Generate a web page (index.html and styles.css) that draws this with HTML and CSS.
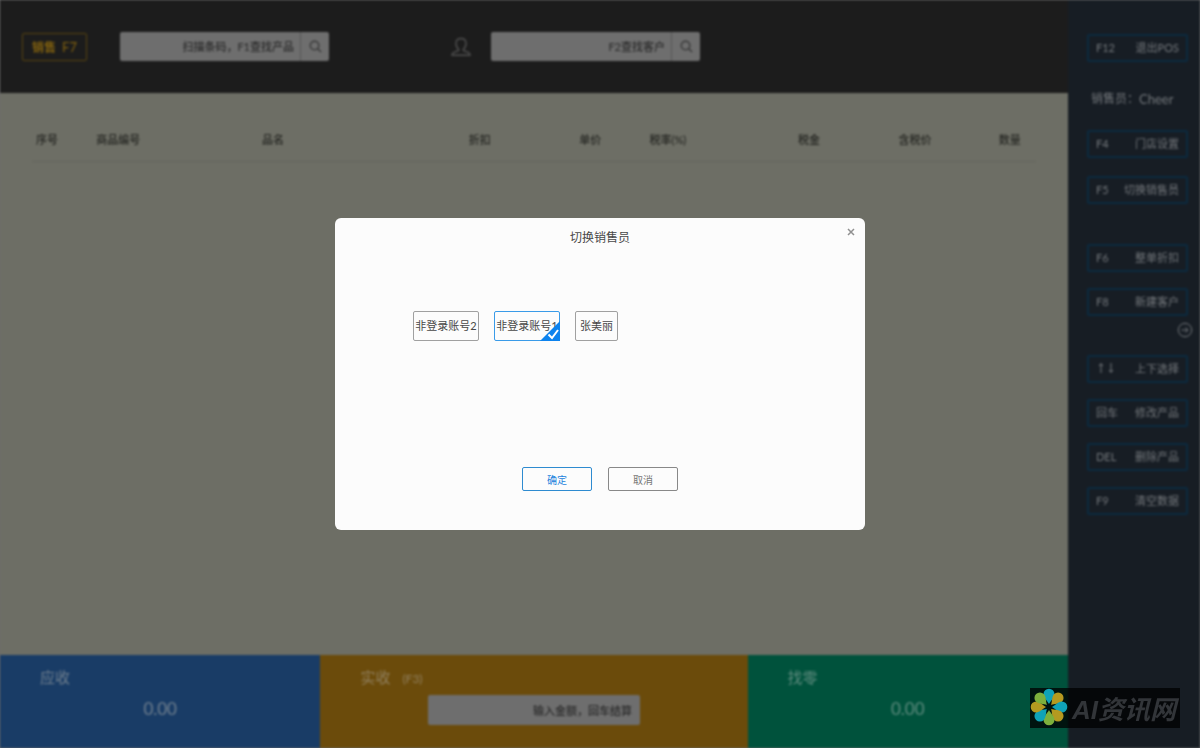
FILE: index.html
```html
<!DOCTYPE html>
<html lang="zh-CN">
<head>
<meta charset="utf-8">
<meta name="viewport" content="width=device-width, initial-scale=1">
<title>切换销售员</title>
<link rel="stylesheet" href="styles.css">
</head>
<body>
<div class="app">
  <div class="main">
    <header class="topbar">
      <button class="mode" type="button">销售&ensp;<span>F7</span></button>
      <form class="search">
        <input type="text" aria-label="查找产品" placeholder="扫描条码，F1查找产品">
        <button type="button" aria-label="搜索产品"><svg viewBox="0 0 14 14"><circle cx="6" cy="6" r="4.6"/><path d="M9.3 9.3 13 13"/></svg></button>
      </form>
      <svg class="person" viewBox="0 0 20 20"><path d="M7.6 12.2C5.6 10.700 5 8.700 5 6.600 5 3.300 7 1.500 10 1.500s5 1.800 5 5.100c0 2.100-.6 4.100-2.600 5.600v1.300l5.200 2.200c1 .5 1.400 1.400 1.400 2.500H1c0-1.100.4-2 1.400-2.500l5.200-2.200z"/></svg>
      <form class="search">
        <input type="text" aria-label="查找客户" placeholder="F2查找客户">
        <button type="button" aria-label="搜索客户"><svg viewBox="0 0 14 14"><circle cx="6" cy="6" r="4.6"/><path d="M9.3 9.3 13 13"/></svg></button>
      </form>
    </header>
    <section class="goods">
      <table>
        <colgroup><col class="c-no"><col class="c-code"><col class="c-name"><col class="c-off"><col class="c-price"><col class="c-rate"><col class="c-tax"><col class="c-total"><col class="c-qty"></colgroup>
        <thead><tr><th>序号</th><th>商品编号</th><th>品名</th><th>折扣</th><th>单价</th><th>税率(%)</th><th>税金</th><th>含税价</th><th>数量</th></tr></thead>
      </table>
    </section>
    <footer class="totals">
      <section class="total due"><h2>应收</h2><output>0.00</output></section>
      <section class="total paid"><h2><label for="paid">实收<small>(F3)</small></label></h2><input id="paid" type="text" placeholder="输入金额，回车结算"></section>
      <section class="total change"><h2>找零</h2><output>0.00</output></section>
    </footer>
  </div>
  <aside class="side">
    <button type="button"><span>F12</span><span>退出POS</span></button>
    <p class="seller"><span>销售员：</span><span>Cheer</span></p>
    <div class="group wide">
      <button type="button"><span>F4</span><span>门店设置</span></button>
      <button type="button"><span>F5</span><span>切换销售员</span></button>
    </div>
    <div class="group">
      <button type="button"><span>F6</span><span>整单折扣</span></button>
      <button type="button"><span>F8</span><span>新建客户</span></button>
    </div>
    <svg class="collapse" viewBox="0 0 16 16"><circle cx="8" cy="8" r="6.700"/><path d="M4.500 8h6M8.500 5.500 11 8l-2.500 2.500"/></svg>
    <div class="group">
      <button type="button"><span class="arrows"><svg viewBox="0 0 20 12"><path d="M5 11V2M3 4l2-2.500L7 4M15 1v9M13 8l2 2.500L17 8"/></svg></span><span>上下选择</span></button>
      <button type="button"><span>回车</span><span>修改产品</span></button>
      <button type="button"><span>DEL</span><span>删除产品</span></button>
      <button type="button"><span>F9</span><span>清空数据</span></button>
    </div>
  </aside>
</div>

<div class="overlay">
  <div class="modal" role="dialog" aria-modal="true" aria-labelledby="title">
    <h1 id="title">切换销售员</h1>
    <button class="close" type="button" aria-label="关闭"><svg viewBox="0 0 8 8"><path d="M1 1l6 6M7 1 1 7"/></svg></button>
    <div class="options">
      <label class="option"><input type="radio" name="seller">非登录账号2</label>
      <label class="option"><input type="radio" name="seller" checked>非登录账号1<svg class="tick" viewBox="0 0 20 20"><path class="corner" d="M20 0v20H0z"/><path class="mark" d="M8.500 13.500l3.500 3.500 6-8"/></svg></label>
      <label class="option short"><input type="radio" name="seller">张美丽</label>
    </div>
    <div class="actions">
      <button class="ok" type="button">确定</button>
      <button class="cancel" type="button">取消</button>
    </div>
  </div>
</div>

<div class="brand">
  <svg viewBox="0 0 38 38">
    <defs><path id="petal" d="M19 16C17.500 13 13.500 9.500 13.500 6.200a5.500 5.500 0 0 1 11 0C24.500 9.500 20.500 13 19 16z"/></defs>
    <use class="cyan" href="#petal"/>
    <use class="gold" href="#petal" transform="rotate(45 19 19)"/>
    <use class="cyan" href="#petal" transform="rotate(90 19 19)"/>
    <use class="gold" href="#petal" transform="rotate(135 19 19)"/>
    <use class="green" href="#petal" transform="rotate(180 19 19)"/>
    <use class="cyan" href="#petal" transform="rotate(225 19 19)"/>
    <use class="gold" href="#petal" transform="rotate(270 19 19)"/>
    <use class="green" href="#petal" transform="rotate(315 19 19)"/>
  </svg>
  <span>AI资讯网</span>
</div>
</body>
</html>
```
FILE: styles.css
```css
* { box-sizing: border-box; }
body {
  margin: 0;
  background: #6e6e6e;
  font-family: Lato, "Noto Sans CJK SC", sans-serif;
  font-size: 11px;
  overflow: hidden;
}
button, input { font: inherit; color: inherit; }
button { background: none; padding: 0; }
svg { display: block; fill: none; stroke: currentColor; }
h1, h2, p { margin: 0; font-weight: 400; }

.app {
  display: grid;
  grid-template-columns: 1fr 132px;
  min-height: 100vh;
  filter: blur(1px);
}
.main { display: flex; flex-direction: column; background: #6d6e65; }

.topbar {
  display: flex;
  align-items: center;
  height: 93px;
  padding: 0 22px;
  background: #1c1c1c;
}
.mode {
  width: 65px;
  height: 28px;
  margin-right: 33px;
  border: 1px solid #58430f;
  border-radius: 2px;
  color: #80600f;
  font-size: 12px;
  font-weight: 700;
}
.mode span { font-weight: 400; font-size: 13px; }
.search {
  display: flex;
  width: 209px;
  height: 29px;
  background: #6e6e6e;
  border-radius: 2px;
}
.search input {
  flex: 1;
  min-width: 0;
  padding: 0 6px;
  border: 0;
  background: none;
  text-align: right;
}
input::placeholder { color: #2c2c2c; opacity: 1; font-weight: 500; }
.search button {
  display: grid;
  place-items: center;
  width: 29px;
  border: 0;
  border-left: 1px solid #575757;
  color: #383838;
}
.search svg { width: 13px; height: 13px; stroke-width: 1.5; }
.person { width: 20px; height: 20px; margin: 0 20px 0 122px; color: #505050; stroke-width: 1.4; }

.goods { flex: 1; padding: 24px 32px; }
table { width: 100%; table-layout: fixed; border-collapse: collapse; }
th {
  height: 44px;
  padding: 0 0 0 4px;
  border-bottom: 1px solid #63645c;
  color: #252622;
  font-weight: 500;
  text-align: left;
  white-space: nowrap;
}
.c-no { width: 6%; }
.c-code { width: 16.5%; }
.c-name { width: 20.6%; }
.c-off { width: 11%; }
.c-price { width: 7%; }
.c-rate { width: 14.8%; }
.c-tax { width: 10%; }
.c-total { width: 10%; }
.c-qty { width: 4.1%; }

.totals { display: grid; grid-template-columns: 3fr 4fr 3fr; height: 93px; }
.total { display: flex; flex-direction: column; align-items: center; padding: 10px 40px; }
.total h2 { align-self: stretch; font-size: 15px; line-height: 24px; }
.total small { margin-left: 12px; font-size: 12px; }
.total output { margin-top: 2px; font-size: 17px; line-height: 36px; }
.total input {
  width: 212px;
  height: 30px;
  margin-top: 4px;
  padding: 0 8px;
  border: 0;
  border-radius: 2px;
  background: #6e6e6e;
  text-align: right;
}
.due { background: #193c66; color: #71808f; }
.paid { background: #6b4b0b; color: #91805f; }
.change { background: #00523c; color: #5f8c7f; }

.side {
  display: flex;
  flex-direction: column;
  padding: 34px 12px 0 19px;
  background: #171d24;
  color: #73777b;
}
.side button {
  display: flex;
  justify-content: space-between;
  align-items: center;
  height: 28px;
  padding: 0 7px 2px;
  border: 2px solid #0b2a40;
  border-radius: 2px;
}
.seller { display: flex; margin: 27px 0 21px; padding-left: 4px; font-size: 12px; line-height: 20px; }
.seller span + span { font-size: 13px; }
.group { display: flex; flex-direction: column; gap: 16px; }
.group.wide { gap: 18px; margin-bottom: 40px; }
.collapse { align-self: flex-end; width: 16px; height: 16px; margin: 6px -5px 17px 0; }
.arrows svg { width: 20px; height: 12px; }

.overlay { position: fixed; inset: 0; display: grid; place-items: center; }
.modal {
  position: relative;
  width: 530px;
  padding: 12px 0 39px;
  border-radius: 6px;
  background: #fcfcfc;
  color: #484848;
}
h1 { font-size: 12px; line-height: 16px; text-align: center; }
.close { position: absolute; top: 6px; right: 6px; display: grid; place-items: center; width: 16px; height: 16px; border: 0; color: #909090; }
.close svg { width: 8px; height: 8px; stroke-width: 1.5; }
.options { display: flex; gap: 15px; margin: 65px 78px 0; }
.option {
  position: relative;
  display: grid;
  place-items: center;
  width: 66px;
  height: 30px;
  padding-bottom: 2px;
  border: 1px solid #a0a0a0;
  border-radius: 2px;
  white-space: nowrap;
}
.option.short { width: 43px; }
.option input { position: absolute; opacity: 0; margin: 0; }
.option:has(:checked) { border-color: #3a9be8; }
.tick { position: absolute; right: -1px; bottom: -1px; width: 20px; height: 20px; }
.corner { fill: #0d83ee; stroke: none; }
.mark { stroke: #fff; stroke-width: 2; }
.actions { display: flex; justify-content: center; gap: 16px; margin-top: 126px; }
.actions button { width: 70px; height: 24px; border: 1px solid #888; border-radius: 2px; color: #777; font-size: 10px; }
.actions .ok { border-color: #2e8bd0; color: #1c83dc; }

.brand {
  position: fixed;
  right: 20px;
  bottom: 20px;
  display: flex;
  align-items: center;
  gap: 4px;
  width: 150px;
  height: 40px;
  padding-bottom: 2px;
  background: rgba(0, 0, 0, .75);
  color: #323539;
  font-family: "Liberation Sans", "Noto Sans CJK SC", sans-serif;
  font-size: 26px;
  font-weight: 700;
  font-style: italic;
  white-space: nowrap;
}
.brand svg { flex: none; width: 38px; height: 38px; stroke: none; }
.cyan { fill: #0fa3b8; }
.gold { fill: #b49a20; }
.green { fill: #7db03c; }
```
